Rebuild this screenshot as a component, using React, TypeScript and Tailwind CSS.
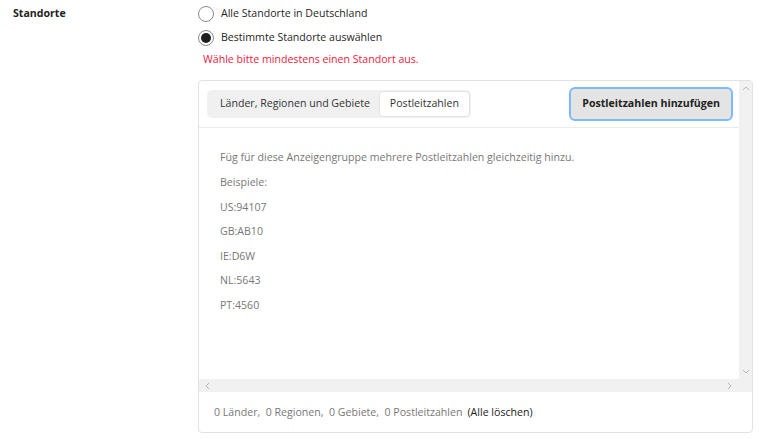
import React from "react";

function Radio({ checked, label }: { checked?: boolean; label: string }) {
  return (
    <div className="flex items-center h-6">
      <span className="w-4 h-4 rounded-full border border-[#8a8a8a] bg-white flex items-center justify-center">
        {checked && <span className="w-[10px] h-[10px] rounded-full bg-[#1f1f1f]" />}
      </span>
      <span className="ml-[7px] text-[10.6px] text-[#1f1f1f]">{label}</span>
    </div>
  );
}

function Chevron({ dir }: { dir: "up" | "down" | "left" | "right" }) {
  const d = {
    up: "M1 5 L4 2 L7 5",
    down: "M1 2 L4 5 L7 2",
    left: "M5 1 L2 4 L5 7",
    right: "M2 1 L5 4 L2 7",
  }[dir];
  return (
    <svg width="8" height="8" viewBox="0 0 8 8" className="block">
      <path d={d} fill="none" stroke="#b5b5b5" strokeWidth="1" />
    </svg>
  );
}

export default function App() {
  const examples = [
    "Füg für diese Anzeigengruppe mehrere Postleitzahlen gleichzeitig hinzu.",
    "Beispiele:",
    "US:94107",
    "GB:AB10",
    "IE:D6W",
    "NL:5643",
    "PT:4560",
  ];
  return (
    <div
      className="w-[761px] h-[439px] bg-white flex overflow-hidden"
      style={{ fontFamily: '"Open Sans", "Noto Sans", sans-serif' }}
    >
      <div className="w-[198px] pl-[13px] pt-[5px]">
        <div className="text-[10.6px] leading-[16px] font-bold text-[#222]">Standorte</div>
      </div>
      <div className="flex flex-col pt-[2px]">
        <Radio label="Alle Standorte in Deutschland" />
        <Radio checked label="Bestimmte Standorte auswählen" />
        <div className="pl-[5px] h-[20px] flex items-center text-[10.6px] text-[#ee1a3c]">
          Wähle bitte mindestens einen Standort aus.
        </div>
        <div className="mt-[10px] w-[555px] h-[353px] border border-[#e2e2e2] rounded-[4px] flex flex-col overflow-hidden">
          <div className="flex h-[311px]">
            <div className="flex flex-col w-[540px]">
              <div className="h-[47px] border-b border-[#ebebeb] flex items-center justify-between pl-[8px] pr-[6px]">
                <div className="flex items-center h-[28px] bg-[#f0f0f0] rounded-[5px] pl-[13px] pr-[1px]">
                  <span className="text-[10.6px] text-[#333] pr-[9px]">Länder, Regionen und Gebiete</span>
                  <span className="h-[26px] flex items-center px-[10px] bg-white border border-[#e3e3e3] rounded-[4px] text-[10.6px] text-[#333]">
                    Postleitzahlen
                  </span>
                </div>
                <button className="h-[34px] px-[11px] bg-[#e4e4e4] border-2 border-[#7dbaf6] rounded-[6px] text-[10.6px] font-bold text-[#222]">
                  Postleitzahlen hinzufügen
                </button>
              </div>
              <div className="flex-1 pl-[21px] pt-[18px] flex flex-col">
                {examples.map((t) => (
                  <div key={t} className="h-[24.6px] flex items-center text-[10.6px] text-[#777]">
                    {t}
                  </div>
                ))}
              </div>
              <div className="h-[13px] bg-[#f1f1f1] flex items-center justify-between px-[5px]">
                <Chevron dir="left" />
                <Chevron dir="right" />
              </div>
            </div>
            <div className="w-[13px] bg-[#f1f1f1] flex flex-col justify-between items-center pt-[4px] pb-[16px]">
              <Chevron dir="up" />
              <Chevron dir="down" />
            </div>
          </div>
          <div className="flex-1 flex items-center pl-[15px] pt-[1px] text-[10.6px] text-[#777]">
            <span>0 Länder,&nbsp; 0 Regionen,&nbsp; 0 Gebiete,&nbsp; 0 Postleitzahlen</span>
            <span className="ml-[5px] text-[#222]">(Alle löschen)</span>
          </div>
        </div>
      </div>
    </div>
  );
}
